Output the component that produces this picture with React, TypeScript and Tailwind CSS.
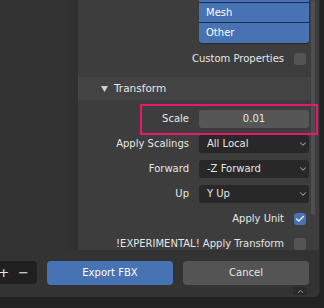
import { Check, ChevronDown, ChevronUp } from 'lucide-react';

function PropLabel({ text }: { text: string }) {
  return <div className="w-[111px] shrink-0 truncate text-right text-[#e6e6e6]">{text}</div>;
}

function Dropdown({ label, value }: { label: string; value: string }) {
  return (
    <div className="flex h-[25px] items-center">
      <PropLabel text={label} />
      <div className="ml-[10px] flex h-[18px] w-[110px] items-center justify-between rounded-[3px] bg-[#282828] pl-[8px] pr-[1px] text-[#e6e6e6]">
        <span>{value}</span>
        <ChevronDown size={10} strokeWidth={2.5} className="text-[#9a9a9a]" />
      </div>
    </div>
  );
}

function CheckRow({ label, checked }: { label: string; checked?: boolean }) {
  return (
    <div className="flex h-[25px] items-center justify-end gap-[10px] pr-[4px] text-[#e6e6e6]">
      <span className="whitespace-nowrap">{label}</span>
      <div
        className={
          checked
            ? 'flex h-[12px] w-[12px] items-center justify-center rounded-[3px] bg-[#4772b3]'
            : 'h-[12px] w-[12px] rounded-[3px] bg-[#545454]'
        }
      >
        {checked && <Check size={10} strokeWidth={3} className="text-white" />}
      </div>
    </div>
  );
}

export default function App() {
  return (
    <div className="h-[308px] w-[324px] overflow-hidden bg-[#222222] font-['DejaVu_Sans',sans-serif] text-[10px] leading-none">
      <div className="flex h-[297px] w-[320px] flex-col overflow-hidden rounded-br-[6px] border-r border-[#2a2a2a] bg-[#3d3d3d]">
        <div className="flex h-[250px] overflow-hidden">
          {/* file list side */}
          <div className="w-[78px] shrink-0 bg-gradient-to-r from-[#333333] from-80% to-[#2f2f2f]" />

          {/* operator settings */}
          <div className="relative flex flex-1 overflow-hidden">
            <div className="w-[232px] shrink-0">
              <div className="ml-[121px] mt-[-17px] w-[110px] overflow-hidden rounded-[3px] bg-[#4772b3] text-white shadow-[0_1px_1px_rgba(0,0,0,0.35)]">
                {['Armature', 'Mesh', 'Other'].map((item, i) => (
                  <div
                    key={item}
                    className={
                      i < 2
                        ? 'flex h-[20px] items-center border-b border-[#1f2d44] pl-[7px]'
                        : 'flex h-[20px] items-center pl-[7px]'
                    }
                  >
                    {item}
                  </div>
                ))}
              </div>

              <div className="mt-[3px]">
                <CheckRow label="Custom Properties" />
              </div>

              <div className="mt-[6px] flex h-[23px] items-center gap-[6px] bg-[#434343] pl-[23px] text-[#e6e6e6]">
                <svg width="7" height="6" viewBox="0 0 7 6">
                  <path d="M0 0 H7 L3.5 6 Z" fill="#d0d0d0" />
                </svg>
                <span className="text-[10.5px]">Transform</span>
              </div>

              <div className="relative mt-[6px]">
                <div className="flex h-[25px] items-center">
                  <PropLabel text="Scale" />
                  <div className="ml-[10px] flex h-[18px] w-[110px] items-center justify-center rounded-[3px] bg-[#565656] text-[#e6e6e6]">
                    0.01
                  </div>
                </div>
                {/* highlight annotation */}
                <div className="pointer-events-none absolute left-[62px] top-[-2px] h-[31px] w-[178px] border-2 border-[#e8196b]" />
              </div>

              <Dropdown label="Apply Scalings" value="All Local" />
              <Dropdown label="Forward" value="-Z Forward" />
              <Dropdown label="Up" value="Y Up" />
              <CheckRow label="Apply Unit" checked />
              <CheckRow label="!EXPERIMENTAL! Apply Transform" />
            </div>

            {/* scrollbar */}
            <div className="ml-[1px] h-[215px] w-[4px] rounded-full bg-[#4f4f4f]" />
          </div>
        </div>

        {/* bottom buttons */}
        <div className="relative flex flex-1 items-start gap-[10px] bg-[#333333] pt-[11px] text-[#e6e6e6]">
          <div className="flex h-[23px] w-[37px] items-center justify-end gap-[9px] rounded-r-[4px] bg-[#1f1f1f] pr-[8px] text-[13px]">
            <span>+</span>
            <span>−</span>
          </div>
          <div className="flex h-[24px] w-[126px] items-center justify-center rounded-[4px] bg-[#4772b3] text-white">
            Export FBX
          </div>
          <div className="flex h-[24px] w-[126px] items-center justify-center rounded-[4px] bg-[#545454]">
            Cancel
          </div>
          <div className="absolute bottom-[2px] right-[12px] flex h-[8px] w-[14px] items-center justify-center rounded-t-[3px] bg-[#2a2a2a]">
            <ChevronUp size={9} strokeWidth={2.5} className="text-[#a0a0a0]" />
          </div>
        </div>
      </div>
    </div>
  );
}
